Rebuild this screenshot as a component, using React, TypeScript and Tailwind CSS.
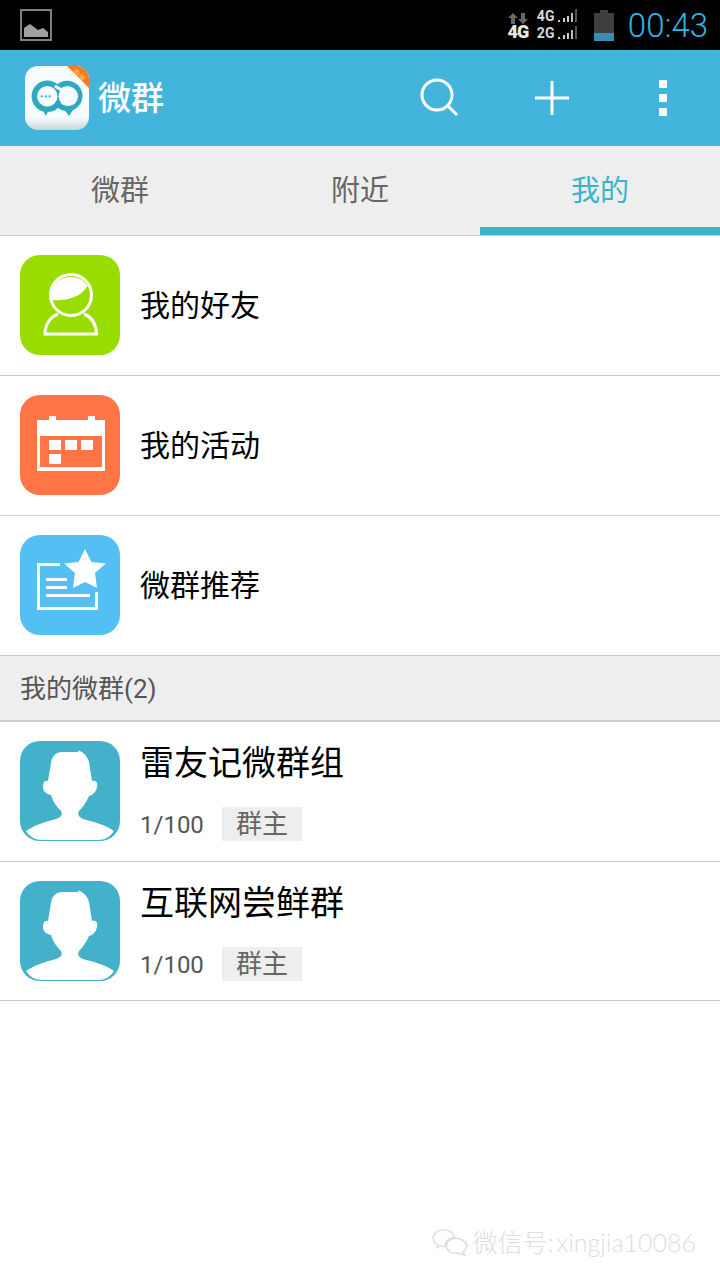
import { ReactNode } from "react"

const cjk = "font-['Roboto','Noto_Sans_CJK_SC',sans-serif]"

function StatusBar() {
  return (
    <div className="h-[50px] bg-black flex items-center pl-5 pr-3">
      <svg width="32" height="32" viewBox="0 0 32 32">
        <rect x="1" y="1" width="30" height="30" fill="none" stroke="#808080" strokeWidth="2" />
        <path d="M4 28V19L10 15L18 21L23 19L28 23V28Z" fill="#a0a0a0" />
      </svg>
      <div className="ml-auto flex items-center">
        <div className="flex flex-col items-center w-[20px] mr-[9px]">
          <svg width="20" height="12" viewBox="0 0 20 12">
            <path d="M5 1L10 6H7V12H3V6H0Z M15 12L10 7H13V1H17V7H20Z" fill="#666" />
          </svg>
          <span className="text-[18px] leading-[15px] font-black tracking-tighter text-[#e8e8e8] font-['Roboto',sans-serif]">4G</span>
        </div>
        <div className="flex flex-col gap-[3px] mr-[17px] mb-[2px]">
          <NetRow label="4G" />
          <NetRow label="2G" />
        </div>
        <svg width="20" height="31" viewBox="0 0 20 31" className="mr-[14px]">
          <path d="M6 0H14V3H20V31H0V3H6Z" fill="#3f3f3f" />
          <rect x="0" y="23" width="20" height="8" fill="#3a8db5" />
        </svg>
        <span className="text-[33px] leading-none text-[#33b5e5] font-['Roboto',sans-serif] font-light">00:43</span>
      </div>
    </div>
  )
}

function NetRow({ label }: { label: string }) {
  return (
    <div className="flex items-end h-[14px]">
      <span className="text-[14px] leading-[14px] font-bold text-[#d8d8d8] w-[19px] font-['Roboto',sans-serif]">{label}</span>
      <svg width="21" height="14" viewBox="0 0 21 14">
        <rect x="2" y="11" width="2" height="2" fill="#ccc" />
        <rect x="7" y="9" width="2" height="4" fill="#ccc" />
        <rect x="11" y="7" width="2" height="6" fill="#ccc" />
        <rect x="15" y="4" width="2" height="9" fill="#bbb" />
        <rect x="19" y="0" width="2" height="13" fill="#555" />
      </svg>
    </div>
  )
}

function AppLogo() {
  return (
    <svg width="64" height="64" viewBox="0 0 64 64">
      <defs>
        <linearGradient id="logoBg" x1="0" y1="0" x2="0" y2="1">
          <stop offset="0.8" stopColor="#f8fcff" />
          <stop offset="1" stopColor="#c6d6d8" />
        </linearGradient>
        <clipPath id="logoClip">
          <rect width="64" height="64" rx="13" />
        </clipPath>
      </defs>
      <g clipPath="url(#logoClip)">
        <rect width="64" height="64" fill="url(#logoBg)" />
        <path d="M42 0H64V22Z" fill="#ff7a14" />
        <circle cx="22.300" cy="30.300" r="13" fill="none" stroke="#2fa9c0" strokeWidth="5.500" />
        <path d="M17 42L20.700 50L25 42Z" fill="#2fa9c0" />
        <path d="M33 21.500A12.500 12.500 0 1 1 32 37" fill="none" stroke="#2fa9c0" strokeWidth="5.500" />
        <circle cx="43.300" cy="30.300" r="9.700" fill="#f8fcff" />
        <path d="M30 20L38 25" stroke="#f8fcff" strokeWidth="3" />
        <path d="M38.500 42.500L44 50L49 42.500Z" fill="#2fa9c0" />
        <circle cx="16.700" cy="30.300" r="1.100" fill="#2fa9c0" />
        <circle cx="20.700" cy="30.300" r="1.100" fill="#2fa9c0" />
        <circle cx="24.700" cy="30.300" r="1.100" fill="#2fa9c0" />
      </g>
      <text x="54" y="11.500" fontSize="7" fill="#ffd9b0" textAnchor="middle" transform="rotate(45 54 9)" fontFamily="Noto Sans CJK SC, sans-serif">内测</text>
    </svg>
  )
}

function AppBar() {
  return (
    <div className="h-24 bg-[#43b5dc] flex items-center pl-[25px]">
      <AppLogo />
      <span className={`ml-[9px] text-[33px] leading-none text-white font-medium ${cjk}`}>微群</span>
      <svg width="40" height="40" viewBox="0 0 40 40" className="ml-[255px]">
        <circle cx="18" cy="17" r="15" fill="none" stroke="#fff" strokeWidth="3" />
        <path d="M29 28L38 37" stroke="#fff" strokeWidth="3" />
      </svg>
      <svg width="34" height="34" viewBox="0 0 34 34" className="ml-[76px]">
        <path d="M0 17H34M17 0V34" stroke="#fff" strokeWidth="3" />
      </svg>
      <div className="ml-[90px] flex flex-col gap-[6px]">
        <div className="w-2 h-2 bg-white" />
        <div className="w-2 h-2 bg-white" />
        <div className="w-2 h-2 bg-white" />
      </div>
    </div>
  )
}

function Tab({ label, active }: { label: string; active?: boolean }) {
  return (
    <div className={`flex-1 flex items-center justify-center pt-[10px] text-[29px] ${cjk} ${active ? "text-[#38b4cf] border-b-8 border-[#38b4cf]" : "text-[#666666] border-b-8 border-transparent"}`}>
      {label}
    </div>
  )
}

function Tabs() {
  return (
    <div className="h-[90px] bg-[#eeeeee] flex border-b border-[#cccccc]">
      <Tab label="微群" />
      <Tab label="附近" />
      <Tab label="我的" active />
    </div>
  )
}

function IconTile({ color, children }: { color: string; children: ReactNode }) {
  return (
    <div className={`w-[100px] h-[100px] rounded-[20px] flex items-center justify-center shrink-0 ${color}`}>
      {children}
    </div>
  )
}

function FriendIcon() {
  return (
    <svg width="100" height="100" viewBox="0 0 100 100">
      <circle cx="51" cy="40" r="20.500" fill="none" stroke="#fff" strokeWidth="3" />
      <path d="M31 45C46 46 60 43 67.500 31A20 20 0 0 0 31 45Z" fill="#fff" />
      <path d="M38 59C30 62 25 70 25 79H76.500C76 70 72 62 64 59" fill="none" stroke="#fff" strokeWidth="3" />
    </svg>
  )
}

function CalendarIcon() {
  return (
    <svg width="100" height="100" viewBox="0 0 100 100">
      <path d="M17 25H29V21H36V25H68V21H75V25H85V76H17Z" fill="#fff" />
      <rect x="20" y="41" width="62" height="31" fill="#ff7545" />
      <rect x="29" y="45" width="12" height="10" fill="#fff" />
      <rect x="45" y="45" width="12" height="10" fill="#fff" />
      <rect x="61" y="45" width="12" height="10" fill="#fff" />
      <rect x="29" y="59" width="12" height="10" fill="#fff" />
    </svg>
  )
}

function RecommendIcon() {
  return (
    <svg width="100" height="100" viewBox="0 0 100 100">
      <path d="M40 29.500H18.500V73.500H76.500V57" fill="none" stroke="#fff" strokeWidth="3" />
      <path d="M26 44.500H47M26 52.500H47M26 60.500H70" stroke="#fff" strokeWidth="3" />
      <path d="M65 14L71.500 27L86 28.500L75 38L77 53L65 47L53 53L55 38L44 28.500L58.500 27Z" fill="#fff" />
    </svg>
  )
}

function AvatarIcon() {
  return (
    <svg width="100" height="100" viewBox="0 0 100 100" className="rounded-[20px] bg-[#43b1ca]">
      <path
        d="M28 40L31 22C32 15 36 11 42 11L58 11L58.500 9.500L62 11C65 13 68 17 69 21L72 40C76 39 78 41 77 46C76 51 73 54 69 55C66 62 62 67 59 70C57 74 59 76 63 78C74 81 86 84 94 90C90 96 85 99 78 99H22C15 99 10 96 6 90C13 85 24 81 36 78C41 76 43 74 41 70C37 66 33 61 31 54C26 53 23 50 23 46C23 41 25 39 28 40Z"
        fill="#fff"
      />
    </svg>
  )
}

function MenuRow({ icon, label }: { icon: ReactNode; label: string }) {
  return (
    <div className="h-[140px] flex items-center pl-5 pb-[1px] border-b border-[#cccccc]">
      {icon}
      <span className={`ml-5 mt-[2px] text-[30px] leading-none text-black ${cjk}`}>{label}</span>
    </div>
  )
}

function GroupRow({ name, last }: { name: string; last?: boolean }) {
  return (
    <div className={`${last ? "h-[139px]" : "h-[140px] pb-[1px]"} flex items-center pl-5 border-b border-[#cccccc]`}>
      <AvatarIcon />
      <div className="ml-5 flex flex-col h-[100px] justify-between">
        <span className={`text-[34px] leading-[44px] text-black ${cjk}`}>{name}</span>
        <div className="flex items-center">
          <span className="w-[62px] h-[34px] text-[24px] leading-[36px] text-[#555555] font-['Roboto',sans-serif]">1/100</span>
          <span className={`ml-5 w-20 h-[34px] bg-[#eeeeee] text-[26px] leading-[34px] text-center text-[#666666] ${cjk}`}>群主</span>
        </div>
      </div>
    </div>
  )
}

function Watermark() {
  return (
    <div className="mt-auto mb-[22px] flex items-center justify-end pr-6">
      <svg width="36" height="28" viewBox="0 0 38 30" fill="none" stroke="#dcdcdc" strokeWidth="1.500">
        <path d="M13 2C6 2 1 6 1 11C1 14 3 17 6 18L5 21L9 19C11 20 12 20 14 20C13 15 18 10 24 10C23 5 18 2 13 2Z" />
        <path d="M25 11C19 11 15 15 15 19C15 24 20 27 25 27C27 27 29 27 31 28L35 29L33 26C35 24 37 22 37 19C37 15 31 11 25 11Z" />
      </svg>
      <span className="ml-[5px] text-[25px] leading-[32px] [word-spacing:-4px] text-[#dedede] font-['Lato','Noto_Sans_CJK_SC',sans-serif] font-light">微信号: xingjia10086</span>
    </div>
  )
}

export default function App() {
  return (
    <div className="w-[720px] h-[1280px] bg-white flex flex-col overflow-hidden">
      <StatusBar />
      <AppBar />
      <Tabs />
      <MenuRow icon={<IconTile color="bg-[#99dc00]"><FriendIcon /></IconTile>} label="我的好友" />
      <MenuRow icon={<IconTile color="bg-[#ff7545]"><CalendarIcon /></IconTile>} label="我的活动" />
      <MenuRow icon={<IconTile color="bg-[#53bff2]"><RecommendIcon /></IconTile>} label="微群推荐" />
      <div className={`h-[66px] bg-[#eeeeee] border-b-2 border-[#cccccc] flex items-center pl-5 pt-[3px] text-[26px] text-[#555555] ${cjk}`}>
        我的微群(2)
      </div>
      <GroupRow name="雷友记微群组" />
      <GroupRow name="互联网尝鲜群" last />
      <Watermark />
    </div>
  )
}
